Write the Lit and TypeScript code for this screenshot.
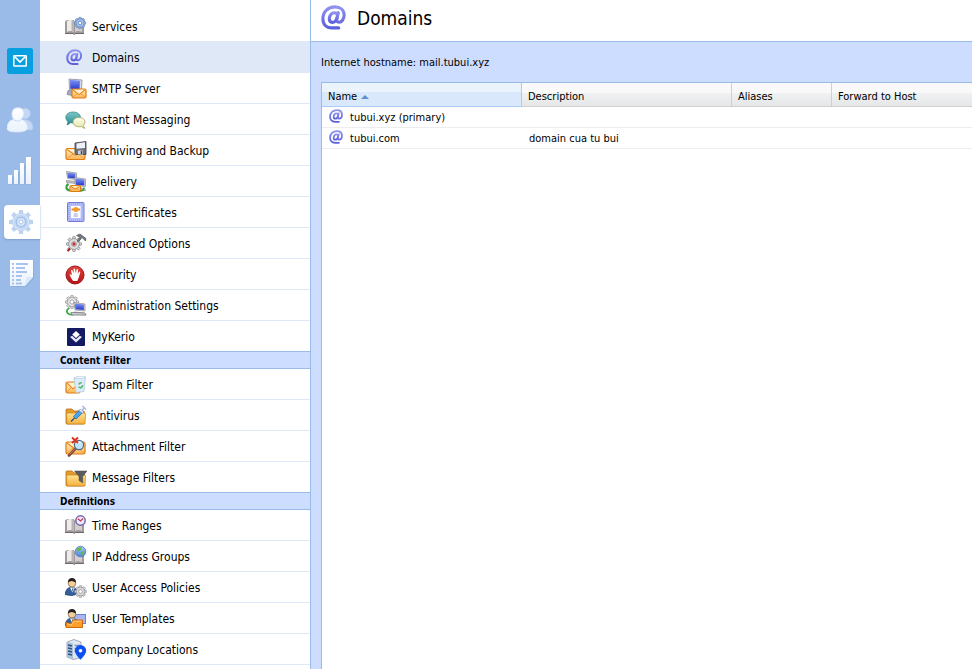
import { LitElement, html, css, svg, nothing } from "lit";
import type { SVGTemplateResult } from "lit";
import { customElement, state } from "lit/decorators.js";
import { classMap } from "lit/directives/class-map.js";

type Art = SVGTemplateResult;

/* ---- building blocks shared by several icons ---- */

const gear = (cx: number, cy: number, r: number, fill: string, edge: string, hub: string): Art => svg`
  <g transform="translate(${cx} ${cy})">
    ${[0, 45, 90, 135].map(
      (a) => svg`<rect x="-1.3" y=${-r} width="2.6" height=${r * 2} rx=".6" fill=${fill} stroke=${edge} stroke-width=".7" transform="rotate(${a})"></rect>`,
    )}
    <circle r=${r * 0.72} fill=${fill} stroke=${edge} stroke-width=".6"></circle>
    <circle r=${r * 0.32} fill=${hub} stroke=${edge} stroke-width=".7"></circle>
  </g>`;

const book: Art = svg`
  <path d="M0 6.500 L2 5 H8.500 L10 6.500 L11.500 5 H18 L19 6.500 V19 H0Z" fill="#a19a9c"></path>
  <path d="M2 6 Q6 4 8.500 6.500 V17 Q6 15.200 2 16.800Z" fill="#eeebea"></path>
  <path d="M10 6.500 Q13 4.500 17 6 V17 Q13 15.200 10 17Z" fill="#d3cecf"></path>
  <path d="M6.500 5.500 L8.800 6.800 V17.300 L6.500 16.200Z" fill="#b9b3b4"></path>
  <path d="M0 18.500 H8 L9.200 19.500 L10.500 18.500 H19" fill="none" stroke="#6f686b" stroke-width="1"></path>`;

const envelope = (x: number, y: number, w: number, h: number): Art => svg`
  <rect x=${x} y=${y} width=${w} height=${h} rx="1.500" fill="url(#mailFill)" stroke="#e07b12" stroke-width="1.200"></rect>
  <path d="M${x + 1} ${y + h - 1} L${x + w * 0.38} ${y + h * 0.5} M${x + w - 1} ${y + h - 1} L${x + w * 0.62} ${y + h * 0.5}" stroke="#ef9a36" stroke-width=".9" fill="none"></path>
  <path d="M${x + 1} ${y + 1} L${x + w / 2} ${y + h * 0.62} L${x + w - 1} ${y + 1}" stroke="#e8861c" stroke-width="1.100" fill="#fff3d2"></path>`;

const monitor = (x: number, y: number, w: number, h: number): Art => svg`
  <path d="M${x} ${y} L${x + w} ${y + 1.5} L${x + w} ${y + h} L${x + 1} ${y + h - 1}Z" fill="#d9d9dc" stroke="#8a8a90" stroke-width=".7"></path>
  <path d="M${x + 0.8} ${y + 0.9} L${x + w - 1.2} ${y + 2.1} L${x + w - 1.2} ${y + h - 1.1} L${x + 1.6} ${y + h - 1.8}Z" fill="url(#screen)"></path>
  <path d="M${x} ${y + h + 1} L${x + w - 1} ${y + h + 2} L${x + w} ${y + h + 4} L${x} ${y + h + 3}Z" fill="#cfcfd3" stroke="#828287" stroke-width=".7"></path>`;

const folder: Art = svg`
  <path d="M1 6 Q1 5 2 5 H7 L9 7 H18 Q19.500 7 19.500 8 V19 Q19.500 20 18.500 20 H2 Q1 20 1 19Z" fill="#e79c25" stroke="#b3701a" stroke-width=".8"></path>
  <path d="M3 9 H19 Q20.500 9 20.500 10 L20 20 H2 L1.500 10 Q1.500 9 3 9Z" fill="url(#folderFill)" stroke="#ca8420" stroke-width=".7"></path>`;

const person: Art = svg`
  <path d="M0 18.500 Q1 12 5 11.500 H9 Q13 12.500 14 17.500 Q7 21 0 18.500Z" fill="#33619f" stroke="#234372" stroke-width=".8"></path>
  <path d="M5 11.500 L7.500 16.500 L9.800 11.500Z" fill="#fff"></path>
  <path d="M7 12.500 L7.700 16 L8.500 12.500Z" fill="#25427d"></path>
  <circle cx="7" cy="7.200" r="3.800" fill="#f5cf99" stroke="#5b442c" stroke-width=".6"></circle>
  <path d="M2.800 6.500 Q3 2 7 2 Q11 2 11 6.500 Q9 5.500 7 5 Q4.500 5 2.800 6.500Z" fill="#25221f"></path>`;

const atSign: Art = svg`
  <g fill="none" stroke="url(#violet)" stroke-width="3" stroke-linecap="round" stroke-linejoin="round">
    <path d="M17 22 H10.500 C5 22 1.800 18.700 1.800 13.300 C1.800 6.500 7 1.800 13.300 1.800 C18.800 1.800 22.200 5 22.200 9.500 C22.200 13.800 19.800 16.600 17.300 16.600 C15.300 16.600 14.800 15.300 15.200 13.300 L16.600 7.400"></path>
    <path d="M15.800 10 C15.500 8.200 14.300 7.400 12.900 7.400 C10.100 7.400 8 10.200 8 13.300 C8 15.400 9 16.700 10.800 16.700 C13 16.700 14.800 14.500 15.400 12"></path>
  </g>`;

/* ---- navigation icons, drawn on a 22 × 22 grid ---- */

const icons: Record<string, Art> = {
  services: svg`${book}${gear(15, 8, 5.600, "#a9c4ea", "#5377b4", "#f3f8ff")}`,
  domains: svg`<g transform="translate(1 3) scale(.68)">${atSign}</g>`,
  smtp: svg`
    <path d="M4 2 L17 3 L16.500 13 L4.500 12.500Z" fill="#d5d8e6" stroke="#8a8ca0" stroke-width=".8"></path>
    <path d="M5 2.800 L15 3.800 L14.500 12.200 L5.300 11.700Z" fill="url(#screen)"></path>
    <path d="M3 13.500 L10 14 V19 L2 17.500Z" fill="#a6abbe" stroke="#777b90" stroke-width=".7"></path>
    ${envelope(7, 12, 14, 9)}`,
  chat: svg`
    <path d="M8 4 C12.500 4 15.500 6.300 15.500 9.500 C15.500 12.700 12.500 15 8 15 Q7 15 5.500 14.700 Q4 16.500 2 16.800 Q3 15 2.800 13.500 Q.800 11.800 .800 9.500 C.800 6.300 3.800 4 8 4Z" fill="url(#teal)" stroke="#2f8287" stroke-width=".7"></path>
    <path d="M14 9.500 C17.500 9.500 20 11.200 20 14 Q20 16 18.500 17.200 Q18.500 19 20 20.300 Q17.500 20 16.500 18.500 Q15 19 13.500 18.700 C10 18.500 8 16.500 8 14 C8 11.400 10.500 9.500 14 9.500Z" fill="url(#cream)" stroke="#a3a36b" stroke-width=".8"></path>`,
  archive: svg`
    ${envelope(1, 9.500, 19, 11)}
    <path d="M10 4 L21 2.500 V15.500 H11 L10 14.500Z" fill="#6e7079" stroke="#3e3f48" stroke-width=".8"></path>
    <path d="M11.500 4.500 L20 3.300 V9 L11.500 9.800Z" fill="#eef1fa"></path>
    <rect x="13" y="11.500" width="5" height="4" fill="#cfd2da"></rect>
    <rect x="15.800" y="12" width="1.500" height="3" fill="#3e3f48"></rect>`,
  delivery: svg`
    ${monitor(1.500, 1.500, 10, 8)}
    ${monitor(9.500, 7.500, 11, 9)}
    <path d="M3.500 14 Q1 15.500 1.500 18 Q2 20 5 20.500" fill="none" stroke="#2fa23c" stroke-width="2.200"></path>
    <path d="M15 21 Q19 21 19 17.500" fill="none" stroke="#2fa23c" stroke-width="1.500"></path>
    ${envelope(5, 15.500, 10.500, 6)}`,
  ssl: svg`
    <rect x="2.500" y="1.500" width="16.500" height="19" rx="1" fill="#b9c2fa" stroke="#7078d8" stroke-width="1"></rect>
    <rect x="4" y="3" width="13.500" height="16" fill="none" stroke="#98a3f2" stroke-width="1.500" stroke-dasharray="1 1"></rect>
    <rect x="6" y="5" width="9.500" height="12" fill="#fbfcff"></rect>
    <path d="M6.500 7.500 H15 V9.500 H6.500Z" fill="#f0921d"></path>
    <circle cx="10.800" cy="8.500" r="2.500" fill="#f79a25"></circle>
    <path d="M9 13 H12.500 M8.500 15 H13" stroke="#9298b8" stroke-width=".9"></path>`,
  advanced: svg`
    ${gear(9, 12, 7.500, "#dededf", "#7a7a7c", "#fff")}
    <circle cx="9" cy="12" r="1.700" fill="#cc2a2f"></circle>
    <path d="M2.500 19 L5 16.500" stroke="#b21a22" stroke-width="2.200"></path>
    <path d="M11.500 3.500 L15 2 L21 6.500 L20.500 9 L17 5.500 L13.500 10 L12 9 L15 5.200Z" fill="#737b83" stroke="#41474e" stroke-width=".6"></path>`,
  security: svg`
    <circle cx="10" cy="12" r="9" fill="url(#stop)" stroke="#9b1519" stroke-width="1"></circle>
    <path d="M8.200 18 Q5.500 14.500 4.500 11.500 Q5.500 10.600 7 12.500 L6 7.500 Q6.800 6.500 7.600 7.600 L8.800 10.500 L8.500 6 Q9.400 5 10.200 6.200 L10.700 10.300 L11.700 6.300 Q12.700 5.600 13.200 6.800 L12.700 10.900 L14.200 8.500 Q15.300 8.200 15.200 9.500 Q14.300 13.500 12.300 18Z" fill="#fff"></path>`,
  admin: svg`
    ${gear(7, 8, 6.500, "#e4e4e4", "#8b8b8e", "#fff")}
    ${monitor(9, 8.500, 11, 8.500)}
    <path d="M4.500 14 Q.500 16 2.500 19 Q4 21 8 20.500" fill="none" stroke="#39a844" stroke-width="1.800"></path>
    <path d="M6 18.500 L20 19 L21 21 H7Z" fill="#d6d6d9" stroke="#77777c" stroke-width=".8"></path>`,
  mykerio: svg`
    <rect x="2" y="3" width="18" height="18" rx="1" fill="#141b63"></rect>
    <path d="M11 6 L14.800 9.500 L11 13 L7.200 9.500Z" fill="#fff"></path>
    <path d="M5 12 L7.200 10.800 L11 14.200 L14.800 10.800 L17 12 L11 17.500Z" fill="#e6e8f5"></path>`,
  spam: svg`
    ${envelope(1, 9, 14, 11)}
    <path d="M9 5 L20.500 4 L19 18.500 L11 19.500Z" fill="#dcecf8" stroke="#b4cce0" stroke-width=".8"></path>
    <path d="M9 5 L12 3.500 L20.500 4 L17.500 5.800Z" fill="#f6fbff" stroke="#b4cce0" stroke-width=".7"></path>
    <path d="M14 11.500 Q14.500 9.200 16.800 10 M17.500 12 Q17.800 14.500 15 15 M13.600 13.800 L14.600 15" fill="none" stroke="#4fb86a" stroke-width="1.400"></path>`,
  antivirus: svg`
    ${folder}
    <path d="M6 17.500 L9.500 14" stroke="#2f4a87" stroke-width="1.200"></path>
    <path d="M8.500 12.500 L14.500 6 L17.500 8.800 L11 15Z" fill="#4ba4ef" stroke="#2468b5" stroke-width=".8"></path>
    <path d="M14 6.500 L15.500 5 L18.500 8 L17.300 9.200Z" fill="#f0f6ff" stroke="#7f95c4" stroke-width=".7"></path>
    <path d="M17 6.500 L19.500 3.500 M17.500 2 L21 5.500" stroke="#a9b9e3" stroke-width="1.600"></path>`,
  attachment: svg`
    ${envelope(1, 7, 19, 12)}
    <path d="M4 20.500 L11 13" stroke="#7a4a38" stroke-width="2.600" stroke-linecap="round"></path>
    <path d="M4.500 19.500 L10.500 13.200" stroke="#c07a5a" stroke-width="1"></path>
    <circle cx="14" cy="10" r="4.600" fill="#bfe4fb" stroke="#4e6b8b" stroke-width="1.200"></circle>
    <path d="M11.500 9 Q13 6.800 15.500 7.500" stroke="#fff" stroke-width="1.300" fill="none"></path>
    <path d="M7 2.500 L13 8 M13 2.500 L7 8" stroke="#e03224" stroke-width="2"></path>`,
  message: svg`
    ${folder}
    <path d="M9.500 5 H22 L17.700 10.500 V17 L14 14.500 V10.500Z" fill="#5b5c60" stroke="#494a4e" stroke-width=".5"></path>`,
  time: svg`${book}
    <circle cx="15.500" cy="6.500" r="4.700" fill="#e6ebff" stroke="#7a62a8" stroke-width="1.500"></circle>
    <path d="M12.800 4.800 L15.500 7 L18 4.500" fill="none" stroke="#d0353e" stroke-width="1.200"></path>`,
  ip: svg`${book}
    <circle cx="15.500" cy="6.500" r="5.300" fill="url(#globe)" stroke="#4a74c4" stroke-width=".8"></circle>
    <path d="M12 3.500 Q14.500 1.500 17 2.500 Q16.500 5 14.500 5.500 Q12.500 7 11.500 6Z M15.500 7 L19.500 6 Q19.500 9 17 11 Q15.500 9.500 15.500 7Z" fill="#63b64c"></path>`,
  access: svg`${person}${gear(15.500, 15.500, 5.800, "#dcdcde", "#8c8c90", "#fff")}`,
  template: svg`
    <rect x="9.500" y="7.500" width="11" height="9" fill="#a9b6f2" stroke="#6474cc" stroke-width=".9"></rect>
    ${person}
    <path d="M1 15.500 L6 17 L8 13 H17.500 V20.500 H1Z" fill="#ff9d2b" stroke="#cc6b0c" stroke-width="1"></path>
    <path d="M2 16.800 L6.500 18 L8.500 14.200 H16.500" fill="none" stroke="#ffd08a" stroke-width=".9"></path>`,
  company: svg`
    <path d="M2 4 L9 1.500 L16 4 V19.500 L8 21.500 L2 19Z" fill="#dfe7ef" stroke="#8b99a8" stroke-width=".8"></path>
    <path d="M2 4 L8 5.500 V21.500 L2 19Z" fill="#a9c1d8"></path>
    <path d="M3 7 L7 8 M3 10 L7 11 M3 13 L7 14 M3 16 L7 17" stroke="#2c5188" stroke-width="1.500"></path>
    <path d="M9.500 7.500 H15 M9.500 10.500 H12 M9.500 13.500 H11" stroke="#7d93ad" stroke-width="1.400"></path>
    <path d="M15.500 21.800 Q9.800 16 9.800 12.800 A5.700 5.700 0 0 1 21.200 12.800 Q21.200 16 15.500 21.800Z" fill="#0d4ff0"></path>
    <circle cx="15.500" cy="12.800" r="1.800" fill="#fff"></circle>`,
};

/* ---- rail icons ---- */

const railIcons: Record<string, Art> = {
  mail: svg`
    <rect x="0" y="0" width="26" height="26" rx="2.500" fill="#069fe0"></rect>
    <rect x="6.800" y="7.800" width="12.500" height="10.300" rx=".5" fill="none" stroke="#fff" stroke-width="1.500"></rect>
    <path d="M7.500 8.500 L13 14 L18.500 8.500" fill="none" stroke="#fff" stroke-width="1.700"></path>`,
  users: svg`
    <g fill="#c3d8f3" stroke="#a9c5eb" stroke-width=".8">
      <circle cx="18" cy="6.500" r="5.500"></circle>
      <path d="M14 23 V13 Q24 11 26 19 Q26.500 22 25 23Z"></path>
    </g>
    <path d="M0 21.500 Q.500 13 7 12.500 Q4.500 10 5 6 Q5.800 .800 11 .800 Q16.500 .800 16.500 6.500 Q16.500 10 14 12.500 Q20 13.500 20.300 21 Q20.300 25 10 25 Q0 25 0 21.500Z" fill="url(#paper)" stroke="#dce9fa" stroke-width=".8"></path>
    <path d="M7 13 Q10.500 15.500 14 13" fill="none" stroke="#c6daf5" stroke-width="1"></path>`,
  stats: svg`
    <g fill="#7ea5d8" opacity=".5">
      <rect x="2.500" y="19.500" width="4" height="8"></rect>
      <rect x="8.500" y="15" width="4" height="12.500"></rect>
      <rect x="14.500" y="8" width="4" height="19.500"></rect>
      <rect x="20.500" y="2" width="4" height="25.500"></rect>
    </g>
    <g fill="url(#paper)">
      <rect x="1" y="18" width="4" height="9"></rect>
      <rect x="7" y="13" width="4" height="14"></rect>
      <rect x="13" y="6" width="4" height="21"></rect>
      <rect x="19" y="0" width="5" height="27"></rect>
    </g>`,
  settings: svg`
    <g transform="translate(14 13)" fill="#bcd3f2">
      ${[0, 45, 90, 135].map((a) => svg`<path d="M-2 -12 H2 L3 0 L2 12 H-2 L-3 0Z" transform="rotate(${a})"></path>`)}
      <circle r="9"></circle>
      <circle r="7.500" fill="none" stroke="#d8e6f9" stroke-width="1.200"></circle>
      <circle r="4.500" fill="#dce9fb" stroke="#9dbde9" stroke-width="1.200"></circle>
      <circle r="2" fill="#fff" stroke="#a9c6ee" stroke-width="1"></circle>
    </g>`,
  logs: svg`
    <path d="M4 2 H27 V19 L19 28 H4Z" fill="#7ea5d8" opacity=".55"></path>
    <path d="M3 1 H26 V18 L18 27 H3Z" fill="url(#paper)"></path>
    <path d="M26 18 H19.500 L18 27Z" fill="#dbe8fa"></path>
    <path d="M5 5 H7 M9 5 H21 M5 9 H7 M9 9 H18 M5 13 H7 M9 13 H20 M5 17 H7 M9 17 H15 M5 21 H7 M9 21 H14 M5 24.500 H7 M9 24.500 H15" stroke="#a6c4ed" stroke-width="1.800"></path>`,
};

interface RailItem { id: string; label: string; w: number; h: number; }
interface NavItem { icon: string; label: string; }
interface NavGroup { title?: string; items: NavItem[]; }
interface Domain { name: string; description: string; aliases: string; forward: string; }

const RAIL: RailItem[] = [
  { id: "mail", label: "Mail", w: 26, h: 26 },
  { id: "users", label: "Accounts", w: 27, h: 26 },
  { id: "stats", label: "Status", w: 26, h: 28 },
  { id: "settings", label: "Configuration", w: 27, h: 26 },
  { id: "logs", label: "Logs", w: 28, h: 28 },
];

const NAV: NavGroup[] = [
  {
    items: [
      { icon: "services", label: "Services" },
      { icon: "domains", label: "Domains" },
      { icon: "smtp", label: "SMTP Server" },
      { icon: "chat", label: "Instant Messaging" },
      { icon: "archive", label: "Archiving and Backup" },
      { icon: "delivery", label: "Delivery" },
      { icon: "ssl", label: "SSL Certificates" },
      { icon: "advanced", label: "Advanced Options" },
      { icon: "security", label: "Security" },
      { icon: "admin", label: "Administration Settings" },
      { icon: "mykerio", label: "MyKerio" },
    ],
  },
  {
    title: "Content Filter",
    items: [
      { icon: "spam", label: "Spam Filter" },
      { icon: "antivirus", label: "Antivirus" },
      { icon: "attachment", label: "Attachment Filter" },
      { icon: "message", label: "Message Filters" },
    ],
  },
  {
    title: "Definitions",
    items: [
      { icon: "time", label: "Time Ranges" },
      { icon: "ip", label: "IP Address Groups" },
      { icon: "access", label: "User Access Policies" },
      { icon: "template", label: "User Templates" },
      { icon: "company", label: "Company Locations" },
    ],
  },
];

const DOMAINS: Domain[] = [
  { name: "tubui.xyz (primary)", description: "", aliases: "", forward: "" },
  { name: "tubui.com", description: "domain cua tu bui", aliases: "", forward: "" },
];

@customElement("app-root")
export class AppRoot extends LitElement {
  @state() private section = "Domains";
  @state() private area = "settings";
  @state() private ascending = true;

  static styles = css`
    :host {
      display: flex;
      height: 100vh;
      overflow: hidden;
      background: #fff;
      color: #000;
      font-family: "DejaVu Sans Condensed", Tahoma, "DejaVu Sans", sans-serif;
      font-size: 12px;
    }
    * { box-sizing: border-box; }
    svg { display: block; flex: none; }

    .rail {
      display: flex;
      flex-direction: column;
      gap: 17px;
      width: 40px;
      flex: none;
      padding: 44px 0 0 4px;
      background: #9abae7;
    }
    .rail-button {
      display: flex;
      align-items: center;
      height: 34px;
      padding: 0 0 0 3px;
      border: 0;
      border-radius: 4px 0 0 4px;
      background: none;
      cursor: pointer;
    }
    .rail-button:first-of-type { margin-bottom: 8px; }
    .rail-button.active {
      background: #fff;
      box-shadow: 0 1px 2px #7f9fcf;
    }

    .nav {
      width: 271px;
      flex: none;
      padding-top: 11px;
      overflow: hidden;
      border-right: 1px solid #99bbe8;
    }
    .list { margin: 0; padding: 0; list-style: none; }
    .item { border-bottom: 1px solid #dfe8f6; }
    .group:not(:last-child) .item:last-child { border-bottom: 0; }
    .link {
      display: flex;
      align-items: center;
      gap: 5px;
      height: 30px;
      padding-left: 25px;
      color: #000;
      text-decoration: none;
      white-space: nowrap;
    }
    .label { padding-top: 2px; }
    .item.selected { background: #dfe8f6; }
    .group-title {
      height: 18px;
      margin: 0;
      padding-left: 20px;
      border: solid #99bbe8;
      border-width: 1px 0;
      background: #cdddff;
      font-size: 10px;
      font-weight: bold;
      line-height: 18px;
    }

    .main {
      display: flex;
      flex-direction: column;
      flex: 1;
      min-width: 0;
      background: #cdddff;
      font-size: 11px;
    }
    .page-head {
      display: flex;
      align-items: center;
      gap: 11px;
      height: 42px;
      flex: none;
      padding: 0 10px 6px;
      border-bottom: 1px solid #99bbe8;
      background: #fff;
    }
    .page-title {
      margin: 0;
      font-size: 19px;
      font-weight: normal;
      line-height: 24px;
    }
    .hostname {
      margin: 0;
      padding: 13px 10px 11px;
      line-height: 16px;
    }
    .grid {
      flex: 1;
      margin-left: 10px;
      border: solid #99bbe8;
      border-width: 1px 0 0 1px;
      background: #fff;
    }
    .table {
      width: 100%;
      border-collapse: separate;
      border-spacing: 0;
      table-layout: fixed;
    }
    .col-name { width: 200px; }
    .col-description { width: 210px; }
    .col-aliases { width: 100px; }
    .head {
      height: 24px;
      padding: 4px 6px 0;
      border: solid #d0d0d0;
      border-width: 0 1px 1px 0;
      background: linear-gradient(#f9f9f9 0 45%, #f0f1f1 45%, #e5e6e8);
      font-weight: normal;
      text-align: left;
      line-height: 16px;
    }
    .head:last-child { border-right: 0; }
    .head.sorted {
      border-color: #aaccf6;
      background: linear-gradient(#ebf3fd 0 40%, #d9e8fb 40%);
    }
    .sort {
      display: flex;
      align-items: center;
      gap: 4px;
      padding: 0;
      border: 0;
      background: none;
      color: inherit;
      font: inherit;
      line-height: 16px;
      cursor: pointer;
    }
    .arrow {
      border: solid transparent;
      border-width: 0 4px 4px;
      border-bottom-color: #5f8fd0;
    }
    .arrow.down { transform: rotate(180deg); }
    .cell {
      height: 21px;
      padding: 2px 7px 0;
      border-bottom: 1px solid #ededed;
      line-height: 18px;
      white-space: nowrap;
    }
    .name {
      display: flex;
      align-items: flex-start;
      gap: 7px;
    }
  `;

  private renderDefs() {
    const stops = (id: string, a: string, b: string) => svg`
      <linearGradient id=${id} x1="0" y1="0" x2="0" y2="1">
        <stop offset="0" stop-color=${a}></stop><stop offset="1" stop-color=${b}></stop>
      </linearGradient>`;
    return svg`<defs>
      ${stops("mailFill", "#fff0c8", "#fdb653")}
      ${stops("screen", "#7f94f4", "#2a3bc8")}
      ${stops("folderFill", "#ffe38e", "#f5b040")}
      ${stops("violet", "#8f92f0", "#5c5fdc")}
      ${stops("teal", "#7fc8c6", "#238a90")}
      ${stops("cream", "#fffff0", "#e3e3a4")}
      ${stops("stop", "#e2433c", "#b51216")}
      ${stops("globe", "#a9d2fb", "#4b7fe0")}
      ${stops("paper", "#ffffff", "#eaf2fd")}
    </defs>`;
  }

  private renderRail() {
    return html`<nav class="rail" aria-label="Areas">
      ${RAIL.map(
        (r) => html`<button
          type="button"
          class=${classMap({ "rail-button": true, active: r.id === this.area })}
          aria-label=${r.label}
          @click=${() => (this.area = r.id)}
        >
          <svg width=${r.w} height=${r.h} viewBox="0 0 ${r.w} ${r.h}" aria-hidden="true">
            ${r.id === "mail" ? this.renderDefs() : nothing}${railIcons[r.id]}
          </svg>
        </button>`,
      )}
    </nav>`;
  }

  private renderNav() {
    return html`<nav class="nav" aria-label="Configuration">
      ${NAV.map(
        (g) => html`<section class="group">
          ${g.title ? html`<h2 class="group-title">${g.title}</h2>` : nothing}
          <ul class="list">
            ${g.items.map(
              (i) => html`<li class=${classMap({ item: true, selected: i.label === this.section })}>
                <a class="link" href="#${i.icon}" @click=${() => (this.section = i.label)}>
                  <svg width="22" height="22" viewBox="0 0 22 22" aria-hidden="true">${icons[i.icon]}</svg>
                  <span class="label">${i.label}</span>
                </a>
              </li>`,
            )}
          </ul>
        </section>`,
      )}
    </nav>`;
  }

  private renderTable() {
    const rows = this.ascending ? DOMAINS : [...DOMAINS].reverse();
    return html`<table class="table">
      <colgroup>
        <col class="col-name" /><col class="col-description" /><col class="col-aliases" /><col />
      </colgroup>
      <thead>
        <tr>
          <th class="head sorted" scope="col" aria-sort=${this.ascending ? "ascending" : "descending"}>
            <button type="button" class="sort" @click=${() => (this.ascending = !this.ascending)}>
              Name<span class=${classMap({ arrow: true, down: !this.ascending })}></span>
            </button>
          </th>
          <th class="head" scope="col">Description</th>
          <th class="head" scope="col">Aliases</th>
          <th class="head" scope="col">Forward to Host</th>
        </tr>
      </thead>
      <tbody>
        ${rows.map(
          (d) => html`<tr>
            <td class="cell">
              <span class="name">
                <svg width="14" height="14" viewBox="0 0 24 24" aria-hidden="true">${atSign}</svg>
                ${d.name}
              </span>
            </td>
            <td class="cell">${d.description}</td>
            <td class="cell">${d.aliases}</td>
            <td class="cell">${d.forward}</td>
          </tr>`,
        )}
      </tbody>
    </table>`;
  }

  render() {
    return html`
      ${this.renderRail()} ${this.renderNav()}
      <main class="main">
        <header class="page-head">
          <svg width="25" height="25" viewBox="0 0 24 24" aria-hidden="true">${atSign}</svg>
          <h1 class="page-title">${this.section}</h1>
        </header>
        <p class="hostname">Internet hostname: mail.tubui.xyz</p>
        <div class="grid">${this.renderTable()}</div>
      </main>
    `;
  }
}
